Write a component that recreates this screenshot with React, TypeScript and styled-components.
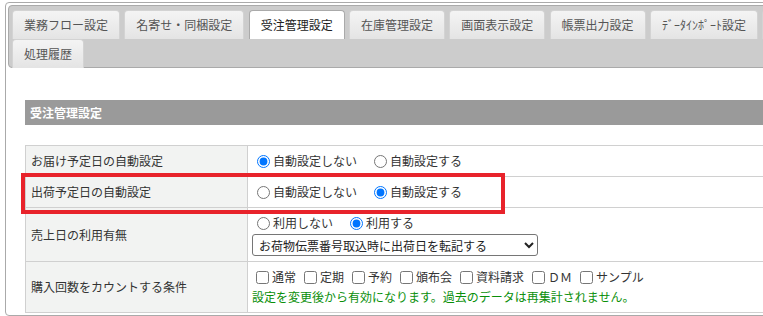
import React, { useState } from 'react';
import styled, { createGlobalStyle } from 'styled-components';

// 受注管理設定の画面（タブ＋設定テーブル）

const GlobalStyle = createGlobalStyle`
html, body {
  margin: 0;
  padding: 0;
  overflow: hidden;
  background: #fff;
}
body {
  font-family: "Noto Sans CJK JP", "Noto Sans", sans-serif;
  font-size: 12px;
  color: #333;
}
`

const Widget = styled.div`
width: 900px;
margin: 2px 0 0 5px;
border: 1px solid #aaa;
border-radius: 4px;
padding: 2px;
`

const TabNav = styled.ul`
display: flex;
flex-wrap: wrap;
column-gap: 4.3px;
row-gap: 1px;
list-style: none;
margin: 0;
padding: 4px 3px 0;
background: #ccc;
border: 1px solid #aaa;
border-radius: 4px;
`

const Tab = styled.li<{ $active?: boolean }>`
height: 28px;
line-height: 28px;
padding: 0 11px;
margin-bottom: -1px;
border: 1px solid ${p => (p.$active ? '#aaa' : '#d3d3d3')};
border-bottom: 0;
border-radius: 4px 4px 0 0;
white-space: nowrap;
cursor: pointer;
color: ${p => (p.$active ? '#212121' : '#555')};
background: ${p =>
  p.$active ? '#fff' : 'linear-gradient(#f4f4f4 0%, #ececec 50%, #e4e4e4 100%)'};
`

const Panel = styled.div`
padding: 32px 0 0 17px;
`

const SectionTitle = styled.div`
height: 25px;
line-height: 25px;
padding-left: 5px;
background: #9a9a9a;
color: #fff;
font-weight: bold;
`

const TableWrap = styled.div`
position: relative;
margin-top: 20px;
`

const Table = styled.table`
width: 100%;
border-collapse: collapse;
`

const Label = styled.th`
width: 211px;
padding: 5px 5px;
border: 1px solid #d0d0d0;
background: #f2f3f2;
color: #333;
font-weight: normal;
text-align: left;
vertical-align: middle;
line-height: 20px;
`

const Value = styled.td`
padding: 5px 4px;
border: 1px solid #d0d0d0;
line-height: 20px;
vertical-align: middle;
`

const Line = styled.div`
display: flex;
align-items: center;
height: 20px;
`

const Choice = styled.label`
display: inline-flex;
align-items: center;
margin-right: 12px;
color: #333;
white-space: nowrap;
`

const Radio = styled.input`
width: 13px;
height: 13px;
margin: 0 3px 0 5px;
`

const Check = styled.input`
width: 13px;
height: 13px;
margin: 0 3px 0 4px;
`

const CheckLabel = styled(Choice)`
margin-right: 4px;
`

const Select = styled.select`
display: block;
width: 286px;
height: 22px;
margin-top: 1px;
padding: 0 2px;
font-family: "Noto Sans CJK JP", sans-serif;
font-size: 12px;
color: #222;
border: 1px solid #767676;
border-radius: 3px;
background: #fff;
`

const Note = styled.div`
height: 20px;
line-height: 20px;
color: #0a8f0a;
`

// 赤枠の注釈
const Highlight = styled.div`
position: absolute;
left: -4px;
top: 28px;
width: 484px;
height: 41px;
box-sizing: border-box;
border: 4px solid #e8232b;
pointer-events: none;
`

const tabs = [
  '業務フロー設定',
  '名寄せ・同梱設定',
  '受注管理設定',
  '在庫管理設定',
  '画面表示設定',
  '帳票出力設定',
  'ﾃﾞｰﾀｲﾝﾎﾟｰﾄ設定',
  'メール設定',
  '処理履歴',
]

const countTargets = ['通常', '定期', '予約', '頒布会', '資料請求', 'ＤＭ', 'サンプル']

function App() {
  const [current, setCurrent] = useState(2)
  const [delivery, setDelivery] = useState('off')
  const [shipping, setShipping] = useState('on')
  const [sales, setSales] = useState('on')

  return (
    <>
      <GlobalStyle />
      <Widget>
        <TabNav>
          {tabs.map((t, i) => (
            <Tab key={t} $active={i === current} onClick={() => setCurrent(i)}>
              {t}
            </Tab>
          ))}
        </TabNav>
        <Panel>
          <SectionTitle>受注管理設定</SectionTitle>
          <TableWrap>
            <Table>
              <tbody>
                <tr>
                  <Label>お届け予定日の自動設定</Label>
                  <Value>
                    <Line>
                      <Choice>
                        <Radio type="radio" name="delivery" checked={delivery === 'off'} onChange={() => setDelivery('off')} />
                        自動設定しない
                      </Choice>
                      <Choice>
                        <Radio type="radio" name="delivery" checked={delivery === 'on'} onChange={() => setDelivery('on')} />
                        自動設定する
                      </Choice>
                    </Line>
                  </Value>
                </tr>
                <tr>
                  <Label>出荷予定日の自動設定</Label>
                  <Value>
                    <Line>
                      <Choice>
                        <Radio type="radio" name="shipping" checked={shipping === 'off'} onChange={() => setShipping('off')} />
                        自動設定しない
                      </Choice>
                      <Choice>
                        <Radio type="radio" name="shipping" checked={shipping === 'on'} onChange={() => setShipping('on')} />
                        自動設定する
                      </Choice>
                    </Line>
                  </Value>
                </tr>
                <tr>
                  <Label>売上日の利用有無</Label>
                  <Value>
                    <Line>
                      <Choice>
                        <Radio type="radio" name="sales" checked={sales === 'off'} onChange={() => setSales('off')} />
                        利用しない
                      </Choice>
                      <Choice>
                        <Radio type="radio" name="sales" checked={sales === 'on'} onChange={() => setSales('on')} />
                        利用する
                      </Choice>
                    </Line>
                    <Select defaultValue="ship">
                      <option value="ship">お荷物伝票番号取込時に出荷日を転記する</option>
                      <option value="order">受注確定時に受注日を転記する</option>
                    </Select>
                  </Value>
                </tr>
                <tr>
                  <Label>購入回数をカウントする条件</Label>
                  <Value>
                    <Line>
                      {countTargets.map(c => (
                        <CheckLabel key={c}>
                          <Check type="checkbox" />
                          {c}
                        </CheckLabel>
                      ))}
                    </Line>
                    <Note>設定を変更後から有効になります。過去のデータは再集計されません。</Note>
                  </Value>
                </tr>
              </tbody>
            </Table>
            <Highlight />
          </TableWrap>
        </Panel>
      </Widget>
    </>
  );
}

export default App;
